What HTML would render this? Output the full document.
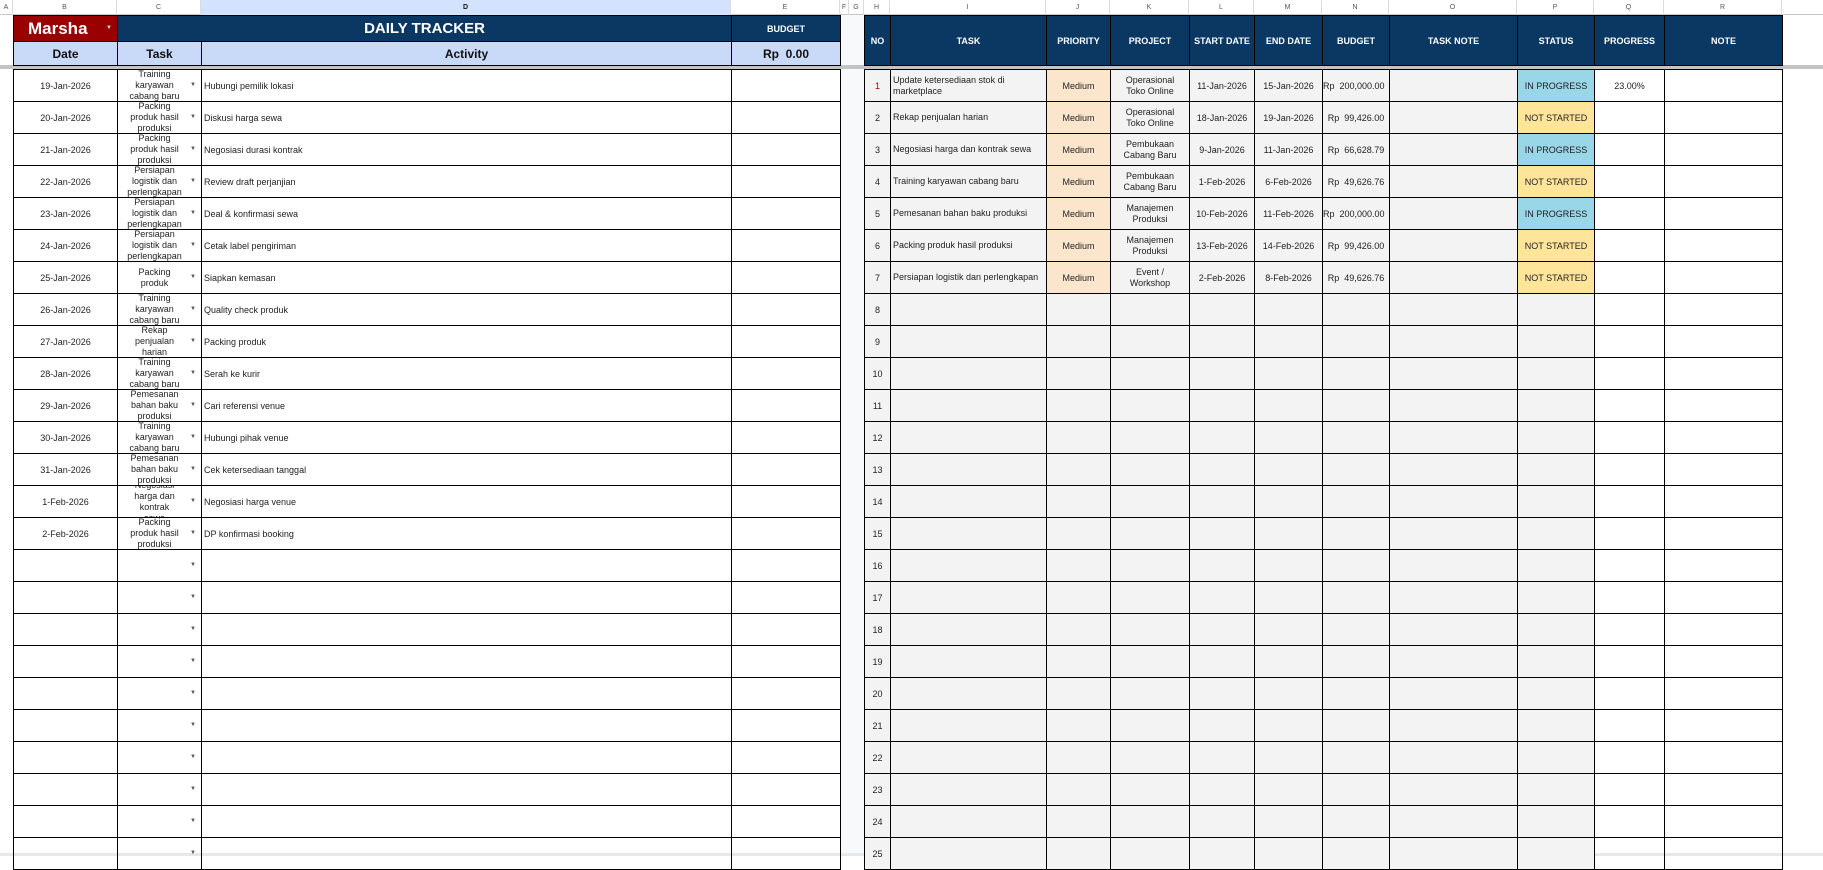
<!DOCTYPE html>
<html><head><meta charset="utf-8"><style>
*{box-sizing:border-box;margin:0;padding:0}
body{width:1823px;height:856px;overflow:hidden;background:#fff;font-family:"Liberation Sans",sans-serif;color:#222;position:relative}
.ab{position:absolute}
.colhdr{top:0;left:0;width:1823px;height:15px;background:#fff;border-bottom:1px solid #c7c7c7}
.colhdr div{position:absolute;top:0;height:15px;font-size:7px;color:#555;text-align:center;line-height:15px;border-right:1px solid #dcdcdc}
table{border-collapse:collapse;table-layout:fixed;position:absolute}
td{border:1px solid #000;font-size:9px;overflow:hidden;padding:0;height:32px;vertical-align:middle}
.nv{background:#0b3763;color:#fff;font-weight:bold;text-align:center;font-size:9px}
.lb{background:#c9daf8;font-weight:bold;text-align:center;font-size:12px;color:#111}
.c{text-align:center}
.task{position:relative}
.task .t{height:31px;display:flex;align-items:center;justify-content:center;text-align:center;line-height:11px;padding:0 20px 0 10px;overflow:hidden}
.task .a{position:absolute;right:5px;top:12px;font-size:6px;color:#555}
.act{padding-left:2px}
.g{background:#f3f3f3}
.pk{background:#fce5cd;text-align:center}
.ip{background:#99d6e8;text-align:center}
.ns{background:#ffe599;text-align:center}
.l{padding-left:2px;line-height:11px}
.pj{text-align:center;line-height:11px;padding:0 8px}
</style></head><body>
<div class="ab colhdr">
<div style="left:0;width:13px">A</div>
<div style="left:13px;width:104px">B</div>
<div style="left:117px;width:84px">C</div>
<div style="left:201px;width:530px;background:#d3e3fd;color:#111;font-weight:bold">D</div>
<div style="left:731px;width:109px">E</div>
<div style="left:840px;width:9px">F</div>
<div style="left:849px;width:15px">G</div>
<div style="left:864px;width:26px">H</div>
<div style="left:890px;width:156px">I</div>
<div style="left:1046px;width:64px">J</div>
<div style="left:1110px;width:79px">K</div>
<div style="left:1189px;width:65px">L</div>
<div style="left:1254px;width:68px">M</div>
<div style="left:1322px;width:67px">N</div>
<div style="left:1389px;width:128px">O</div>
<div style="left:1517px;width:77px">P</div>
<div style="left:1594px;width:70px">Q</div>
<div style="left:1664px;width:118px">R</div>
</div>
<div class="ab" style="left:840px;top:15px;width:24px;height:841px;background:#f8f9fa"></div>
<div class="ab" style="left:0;top:65px;width:1823px;height:4px;background:#c4c4c4"></div>
<div class="ab" style="left:0;top:853px;width:1823px;height:3px;background:#e8e8e8"></div>

<table style="left:13px;top:15px;width:827px">
<colgroup><col style="width:104px"><col style="width:84px"><col style="width:530px"><col style="width:109px"></colgroup>
<tr><td style="height:26px;background:#990000;color:#fff;font-weight:bold;font-size:17px;padding-left:14px;position:relative">Marsha<span style="position:absolute;right:5px;top:9px;font-size:6px;color:#ddd">▼</span></td><td colspan="2" class="nv" style="height:26px;font-size:15px">DAILY TRACKER</td><td class="nv" style="height:26px">BUDGET</td></tr>
<tr><td class="lb" style="height:24px">Date</td><td class="lb" style="height:24px">Task</td><td class="lb" style="height:24px">Activity</td><td class="lb" style="height:24px">Rp&nbsp; 0.00</td></tr>
</table>

<table style="left:13px;top:69px;width:827px">
<colgroup><col style="width:104px"><col style="width:84px"><col style="width:530px"><col style="width:109px"></colgroup>
<tr><td class="c">19-Jan-2026</td><td class="task"><div class="t">Training karyawan cabang baru</div><span class="a">▼</span></td><td class="act">Hubungi pemilik lokasi</td><td></td></tr>
<tr><td class="c">20-Jan-2026</td><td class="task"><div class="t">Packing produk hasil produksi</div><span class="a">▼</span></td><td class="act">Diskusi harga sewa</td><td></td></tr>
<tr><td class="c">21-Jan-2026</td><td class="task"><div class="t">Packing produk hasil produksi</div><span class="a">▼</span></td><td class="act">Negosiasi durasi kontrak</td><td></td></tr>
<tr><td class="c">22-Jan-2026</td><td class="task"><div class="t">Persiapan logistik dan perlengkapan</div><span class="a">▼</span></td><td class="act">Review draft perjanjian</td><td></td></tr>
<tr><td class="c">23-Jan-2026</td><td class="task"><div class="t">Persiapan logistik dan perlengkapan</div><span class="a">▼</span></td><td class="act">Deal &amp; konfirmasi sewa</td><td></td></tr>
<tr><td class="c">24-Jan-2026</td><td class="task"><div class="t">Persiapan logistik dan perlengkapan</div><span class="a">▼</span></td><td class="act">Cetak label pengiriman</td><td></td></tr>
<tr><td class="c">25-Jan-2026</td><td class="task"><div class="t">Packing produk</div><span class="a">▼</span></td><td class="act">Siapkan kemasan</td><td></td></tr>
<tr><td class="c">26-Jan-2026</td><td class="task"><div class="t">Training karyawan cabang baru</div><span class="a">▼</span></td><td class="act">Quality check produk</td><td></td></tr>
<tr><td class="c">27-Jan-2026</td><td class="task"><div class="t">Rekap penjualan harian</div><span class="a">▼</span></td><td class="act">Packing produk</td><td></td></tr>
<tr><td class="c">28-Jan-2026</td><td class="task"><div class="t">Training karyawan cabang baru</div><span class="a">▼</span></td><td class="act">Serah ke kurir</td><td></td></tr>
<tr><td class="c">29-Jan-2026</td><td class="task"><div class="t">Pemesanan bahan baku produksi</div><span class="a">▼</span></td><td class="act">Cari referensi venue</td><td></td></tr>
<tr><td class="c">30-Jan-2026</td><td class="task"><div class="t">Training karyawan cabang baru</div><span class="a">▼</span></td><td class="act">Hubungi pihak venue</td><td></td></tr>
<tr><td class="c">31-Jan-2026</td><td class="task"><div class="t">Pemesanan bahan baku produksi</div><span class="a">▼</span></td><td class="act">Cek ketersediaan tanggal</td><td></td></tr>
<tr><td class="c">1-Feb-2026</td><td class="task"><div class="t">Negosiasi harga dan kontrak sewa</div><span class="a">▼</span></td><td class="act">Negosiasi harga venue</td><td></td></tr>
<tr><td class="c">2-Feb-2026</td><td class="task"><div class="t">Packing produk hasil produksi</div><span class="a">▼</span></td><td class="act">DP konfirmasi booking</td><td></td></tr>
<tr><td></td><td class="task"><div class="t"></div><span class="a">▼</span></td><td></td><td></td></tr>
<tr><td></td><td class="task"><div class="t"></div><span class="a">▼</span></td><td></td><td></td></tr>
<tr><td></td><td class="task"><div class="t"></div><span class="a">▼</span></td><td></td><td></td></tr>
<tr><td></td><td class="task"><div class="t"></div><span class="a">▼</span></td><td></td><td></td></tr>
<tr><td></td><td class="task"><div class="t"></div><span class="a">▼</span></td><td></td><td></td></tr>
<tr><td></td><td class="task"><div class="t"></div><span class="a">▼</span></td><td></td><td></td></tr>
<tr><td></td><td class="task"><div class="t"></div><span class="a">▼</span></td><td></td><td></td></tr>
<tr><td></td><td class="task"><div class="t"></div><span class="a">▼</span></td><td></td><td></td></tr>
<tr><td></td><td class="task"><div class="t"></div><span class="a">▼</span></td><td></td><td></td></tr>
<tr><td></td><td class="task"><div class="t"></div><span class="a">▼</span></td><td></td><td></td></tr>
</table>

<table style="left:864px;top:15px;width:918px">
<colgroup><col style="width:26px"><col style="width:156px"><col style="width:64px"><col style="width:79px"><col style="width:65px"><col style="width:68px"><col style="width:67px"><col style="width:128px"><col style="width:77px"><col style="width:70px"><col style="width:118px"></colgroup>
<tr><td class="nv" style="height:50px">NO</td><td class="nv" style="height:50px">TASK</td><td class="nv" style="height:50px">PRIORITY</td><td class="nv" style="height:50px">PROJECT</td><td class="nv" style="height:50px">START DATE</td><td class="nv" style="height:50px">END DATE</td><td class="nv" style="height:50px">BUDGET</td><td class="nv" style="height:50px">TASK NOTE</td><td class="nv" style="height:50px">STATUS</td><td class="nv" style="height:50px">PROGRESS</td><td class="nv" style="height:50px">NOTE</td></tr>
</table>

<table style="left:864px;top:69px;width:918px">
<colgroup><col style="width:26px"><col style="width:156px"><col style="width:64px"><col style="width:79px"><col style="width:65px"><col style="width:68px"><col style="width:67px"><col style="width:128px"><col style="width:77px"><col style="width:70px"><col style="width:118px"></colgroup>
<tr><td class="g c" style="color:#a00">1</td><td class="g l">Update ketersediaan stok di marketplace</td><td class="pk">Medium</td><td class="g pj">Operasional Toko Online</td><td class="g c">11-Jan-2026</td><td class="g c">15-Jan-2026</td><td class="g" style="white-space:nowrap">Rp&nbsp; 200,000.00</td><td class="g"></td><td class="ip">IN PROGRESS</td><td class="c">23.00%</td><td></td></tr>
<tr><td class="g c">2</td><td class="g l">Rekap penjualan harian</td><td class="pk">Medium</td><td class="g pj">Operasional Toko Online</td><td class="g c">18-Jan-2026</td><td class="g c">19-Jan-2026</td><td class="g c">Rp&nbsp; 99,426.00</td><td class="g"></td><td class="ns">NOT STARTED</td><td></td><td></td></tr>
<tr><td class="g c">3</td><td class="g l">Negosiasi harga dan kontrak sewa</td><td class="pk">Medium</td><td class="g pj">Pembukaan Cabang Baru</td><td class="g c">9-Jan-2026</td><td class="g c">11-Jan-2026</td><td class="g c">Rp&nbsp; 66,628.79</td><td class="g"></td><td class="ip">IN PROGRESS</td><td></td><td></td></tr>
<tr><td class="g c">4</td><td class="g l">Training karyawan cabang baru</td><td class="pk">Medium</td><td class="g pj">Pembukaan Cabang Baru</td><td class="g c">1-Feb-2026</td><td class="g c">6-Feb-2026</td><td class="g c">Rp&nbsp; 49,626.76</td><td class="g"></td><td class="ns">NOT STARTED</td><td></td><td></td></tr>
<tr><td class="g c">5</td><td class="g l">Pemesanan bahan baku produksi</td><td class="pk">Medium</td><td class="g pj">Manajemen Produksi</td><td class="g c">10-Feb-2026</td><td class="g c">11-Feb-2026</td><td class="g" style="white-space:nowrap">Rp&nbsp; 200,000.00</td><td class="g"></td><td class="ip">IN PROGRESS</td><td></td><td></td></tr>
<tr><td class="g c">6</td><td class="g l">Packing produk hasil produksi</td><td class="pk">Medium</td><td class="g pj">Manajemen Produksi</td><td class="g c">13-Feb-2026</td><td class="g c">14-Feb-2026</td><td class="g c">Rp&nbsp; 99,426.00</td><td class="g"></td><td class="ns">NOT STARTED</td><td></td><td></td></tr>
<tr><td class="g c">7</td><td class="g l">Persiapan logistik dan perlengkapan</td><td class="pk">Medium</td><td class="g pj">Event / Workshop</td><td class="g c">2-Feb-2026</td><td class="g c">8-Feb-2026</td><td class="g c">Rp&nbsp; 49,626.76</td><td class="g"></td><td class="ns">NOT STARTED</td><td></td><td></td></tr>
<tr><td class="g c">8</td><td class="g"></td><td class="g"></td><td class="g"></td><td class="g"></td><td class="g"></td><td class="g"></td><td class="g"></td><td class="g"></td><td></td><td></td></tr>
<tr><td class="g c">9</td><td class="g"></td><td class="g"></td><td class="g"></td><td class="g"></td><td class="g"></td><td class="g"></td><td class="g"></td><td class="g"></td><td></td><td></td></tr>
<tr><td class="g c">10</td><td class="g"></td><td class="g"></td><td class="g"></td><td class="g"></td><td class="g"></td><td class="g"></td><td class="g"></td><td class="g"></td><td></td><td></td></tr>
<tr><td class="g c">11</td><td class="g"></td><td class="g"></td><td class="g"></td><td class="g"></td><td class="g"></td><td class="g"></td><td class="g"></td><td class="g"></td><td></td><td></td></tr>
<tr><td class="g c">12</td><td class="g"></td><td class="g"></td><td class="g"></td><td class="g"></td><td class="g"></td><td class="g"></td><td class="g"></td><td class="g"></td><td></td><td></td></tr>
<tr><td class="g c">13</td><td class="g"></td><td class="g"></td><td class="g"></td><td class="g"></td><td class="g"></td><td class="g"></td><td class="g"></td><td class="g"></td><td></td><td></td></tr>
<tr><td class="g c">14</td><td class="g"></td><td class="g"></td><td class="g"></td><td class="g"></td><td class="g"></td><td class="g"></td><td class="g"></td><td class="g"></td><td></td><td></td></tr>
<tr><td class="g c">15</td><td class="g"></td><td class="g"></td><td class="g"></td><td class="g"></td><td class="g"></td><td class="g"></td><td class="g"></td><td class="g"></td><td></td><td></td></tr>
<tr><td class="g c">16</td><td class="g"></td><td class="g"></td><td class="g"></td><td class="g"></td><td class="g"></td><td class="g"></td><td class="g"></td><td class="g"></td><td></td><td></td></tr>
<tr><td class="g c">17</td><td class="g"></td><td class="g"></td><td class="g"></td><td class="g"></td><td class="g"></td><td class="g"></td><td class="g"></td><td class="g"></td><td></td><td></td></tr>
<tr><td class="g c">18</td><td class="g"></td><td class="g"></td><td class="g"></td><td class="g"></td><td class="g"></td><td class="g"></td><td class="g"></td><td class="g"></td><td></td><td></td></tr>
<tr><td class="g c">19</td><td class="g"></td><td class="g"></td><td class="g"></td><td class="g"></td><td class="g"></td><td class="g"></td><td class="g"></td><td class="g"></td><td></td><td></td></tr>
<tr><td class="g c">20</td><td class="g"></td><td class="g"></td><td class="g"></td><td class="g"></td><td class="g"></td><td class="g"></td><td class="g"></td><td class="g"></td><td></td><td></td></tr>
<tr><td class="g c">21</td><td class="g"></td><td class="g"></td><td class="g"></td><td class="g"></td><td class="g"></td><td class="g"></td><td class="g"></td><td class="g"></td><td></td><td></td></tr>
<tr><td class="g c">22</td><td class="g"></td><td class="g"></td><td class="g"></td><td class="g"></td><td class="g"></td><td class="g"></td><td class="g"></td><td class="g"></td><td></td><td></td></tr>
<tr><td class="g c">23</td><td class="g"></td><td class="g"></td><td class="g"></td><td class="g"></td><td class="g"></td><td class="g"></td><td class="g"></td><td class="g"></td><td></td><td></td></tr>
<tr><td class="g c">24</td><td class="g"></td><td class="g"></td><td class="g"></td><td class="g"></td><td class="g"></td><td class="g"></td><td class="g"></td><td class="g"></td><td></td><td></td></tr>
<tr><td class="g c">25</td><td class="g"></td><td class="g"></td><td class="g"></td><td class="g"></td><td class="g"></td><td class="g"></td><td class="g"></td><td class="g"></td><td></td><td></td></tr>
</table>
</body></html>
